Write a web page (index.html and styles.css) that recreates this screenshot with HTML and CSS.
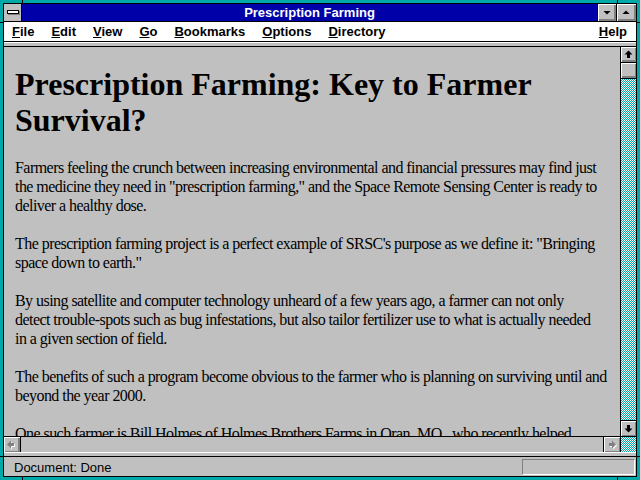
FILE: index.html
```html
<!DOCTYPE html>
<html>
<head>
<meta charset="utf-8">
<title>Prescription Farming</title>
<link rel="stylesheet" href="styles.css">
</head>
<body>
<div class="screen">
  <div class="win">
    <div class="titlebar">
      <div class="sysbox"><div class="sysbar"></div></div>
      <div class="title">Prescription Farming</div>
      <div class="tbtn tmin"><svg width="18" height="17" viewBox="0 0 18 17"><polygon points="5.5,7 12.5,7 9,10.5" fill="#000"/></svg></div>
      <div class="tbtn tmax"><svg width="19" height="17" viewBox="0 0 19 17"><polygon points="5.5,10 12.5,10 9,6.5" fill="#000"/></svg></div>
    </div>
    <div class="menubar">
      <span class="mi"><u>F</u>ile</span>
      <span class="mi"><u>E</u>dit</span>
      <span class="mi"><u>V</u>iew</span>
      <span class="mi"><u>G</u>o</span>
      <span class="mi"><u>B</u>ookmarks</span>
      <span class="mi"><u>O</u>ptions</span>
      <span class="mi"><u>D</u>irectory</span>
      <span class="mi help"><u>H</u>elp</span>
    </div>
    <div class="strip"></div>
    <div class="main">
      <div class="viewcol">
        <div class="view">
          <h1>Prescription Farming: Key to Farmer Survival?</h1>
          <p>Farmers feeling the crunch between increasing environmental and financial pressures may find just the medicine they need in "prescription farming," and the Space Remote Sensing Center is ready to deliver a healthy dose.</p>
          <p>The prescription farming project is a perfect example of SRSC's purpose as we define it: "Bringing space down to earth."</p>
          <p>By using satellite and computer technology unheard of a few years ago, a farmer can not only<br>detect trouble-spots such as bug infestations, but also tailor fertilizer use to what is actually needed<br>in a given section of field.</p>
          <p>The benefits of such a program become obvious to the farmer who is planning on surviving until and beyond the year 2000.</p>
          <p>One such farmer is Bill Holmes of Holmes Brothers Farms in Oran, MO., who recently helped<br>test the system on his fields.</p>
        </div>
        <div class="hscroll">
          <div class="sbtn hleft"><svg width="16" height="15" viewBox="0 0 16 15"><polygon points="4,8.5 8,4.5 8,7 11,7 11,10 8,10 8,12.5" fill="#fff"/><polygon points="3,7.5 7,3.5 7,6 10,6 10,9 7,9 7,11.5" fill="#808080"/></svg></div>
          <div class="htrack"></div>
          <div class="sbtn hright"><svg width="16" height="15" viewBox="0 0 16 15"><polygon points="13,8.5 9,4.5 9,7 6,7 6,10 9,10 9,12.5" fill="#fff"/><polygon points="12,7.5 8,3.5 8,6 5,6 5,9 8,9 8,11.5" fill="#808080"/></svg></div>
        </div>
      </div>
      <div class="vscroll">
        <div class="sbtn vup"><svg width="15" height="15" viewBox="0 0 15 15"><polygon points="7.5,3.5 11.5,7.5 9,7.5 9,11 6,11 6,7.5 3.5,7.5" fill="#000"/></svg></div>
        <div class="sbtn thumb"></div>
        <div class="vtrack"></div>
        <div class="sbtn vdown"><svg width="15" height="15" viewBox="0 0 15 15"><polygon points="7.5,11.5 11.5,7.5 9,7.5 9,4 6,4 6,7.5 3.5,7.5" fill="#000"/></svg></div>
        <div class="vcorner"></div>
      </div>
    </div>
    <div class="strip strip-b"></div>
    <div class="status">
      <span class="stext">Document: Done</span>
      <div class="sfield"></div>
    </div>
  </div>
  <div class="notch nv" style="left:22px;top:0"></div>
  <div class="notch nv" style="left:617px;top:0"></div>
  <div class="notch nv" style="left:22px;top:476px"></div>
  <div class="notch nv" style="left:617px;top:476px"></div>
  <div class="notch nh" style="left:0;top:22px"></div>
  <div class="notch nh" style="left:636px;top:22px"></div>
  <div class="notch nh" style="left:0;top:456px"></div>
  <div class="notch nh" style="left:636px;top:456px"></div>
</div>
</body>
</html>
```
FILE: styles.css
```css
* { box-sizing: border-box; }
html, body { margin: 0; padding: 0; background: #00a8a8; }
.screen {
  position: relative;
  width: 640px;
  height: 480px;
  background: #00a8a8;
  padding: 3px;
  overflow: hidden;
}
.win {
  width: 634px;
  height: 474px;
  border: 1px solid #000;
  display: flex;
  flex-direction: column;
  background: #c0c0c0;
}
.titlebar {
  height: 18px;
  flex: none;
  display: flex;
  background: #0000a8;
  border-bottom: 1px solid #000;
}
.sysbox {
  width: 18px;
  height: 17px;
  background: #c0c0c0;
  border-right: 1px solid #000;
  position: relative;
}
.sysbar {
  position: absolute;
  left: 3px;
  top: 6px;
  width: 12px;
  height: 4px;
  background: #fff;
  border: 1px solid #000;
  box-shadow: 1px 1px 0 #808080;
}
.title {
  flex: 1;
  color: #fff;
  font: bold 13px/17px "Liberation Sans", Arial, sans-serif;
  text-align: center;
}
.tbtn {
  height: 17px;
  border-left: 1px solid #000;
  background: #c0c0c0;
  box-shadow: inset 1px 1px 0 #fff, inset -2px -2px 0 #808080;
}
.tbtn svg { display: block; }
.tmin { width: 19px; }
.tmax { width: 20px; }
.menubar {
  height: 20px;
  flex: none;
  background: #fff;
  border-bottom: 1px solid #000;
  display: flex;
  align-items: flex-start;
  padding: 0 9px 0 4px;
  font: bold 13px/19px "Liberation Sans", Arial, sans-serif;
  color: #000;
}
.mi { margin-left: 4px; margin-right: 13px; }
.mi u { text-decoration-thickness: 1px; text-underline-offset: 1px; }
.mi.help { margin-left: auto; margin-right: 0; }
.strip {
  height: 5px;
  flex: none;
  background: #c0c0c0;
  border-top: 1px solid #fff;
  border-bottom: 1px solid #000;
}
.main {
  flex: 1;
  display: flex;
  min-height: 0;
}
.viewcol {
  flex: 1;
  display: flex;
  flex-direction: column;
  min-width: 0;
}
.view {
  flex: 1;
  overflow: hidden;
  background: #c0c0c0;
  padding: 0 5px 0 11px;
  font: 16px/19px "Liberation Serif", "Times New Roman", serif;
  letter-spacing: -0.55px;
  color: #000;
}
.view h1 {
  font: bold 32px/36px "Liberation Serif", "Times New Roman", serif;
  letter-spacing: 0;
  margin: 19px 0 20px;
}
.view p { margin: 0 0 19px; }
.sbtn {
  background: #c0c0c0;
  box-shadow: inset 1px 1px 0 #fff, inset -1px -1px 0 #808080;
}
.sbtn svg { display: block; }
.hscroll {
  height: 16px;
  flex: none;
  border-top: 1px solid #000;
  display: flex;
  background: #c0c0c0;
}
.hleft { width: 17px; height: 15px; border-right: 1px solid #000; box-shadow: inset 1px 1px 0 #fff, inset -2px -1px 0 #808080; }
.hright { width: 17px; height: 15px; border-left: 1px solid #000; box-shadow: inset 1px 1px 0 #fff, inset -1px -1px 0 #808080; }
.htrack { flex: 1; background: #c0c0c0; }
.vscroll {
  width: 16px;
  flex: none;
  border-left: 1px solid #000;
  display: flex;
  flex-direction: column;
}
.vup { height: 16px; border-bottom: 1px solid #000; box-shadow: inset 1px 1px 0 #fff, inset -1px -2px 0 #808080; }
.thumb { height: 16px; border-bottom: 1px solid #000; box-shadow: inset 1px 1px 0 #fff, inset -1px -2px 0 #808080; }
.vtrack, .vcorner {
  background: repeating-conic-gradient(#00a8a8 0 25%, #fff 0 50%) 0 0 / 2px 2px;
}
.vtrack { flex: 1; }
.vdown { height: 17px; border-top: 1px solid #000; border-bottom: 1px solid #000; }
.vcorner { height: 15px; flex: none; }
.status {
  height: 19px;
  flex: none;
  display: flex;
  align-items: flex-start;
  justify-content: space-between;
  background: #c0c0c0;
  padding-top: 1px;
}
.stext {
  font: 13px/19px "Liberation Sans", Arial, sans-serif;
  color: #000;
  padding-left: 10px;
}
.sfield {
  width: 113px;
  height: 16px;
  margin-top: 1px;
  margin-right: 1px;
  border: 1px solid;
  border-color: #808080 #fff #fff #808080;
}
.notch { position: absolute; background: #000; }
.nv { width: 1px; height: 4px; }
.nh { width: 4px; height: 1px; }
```
